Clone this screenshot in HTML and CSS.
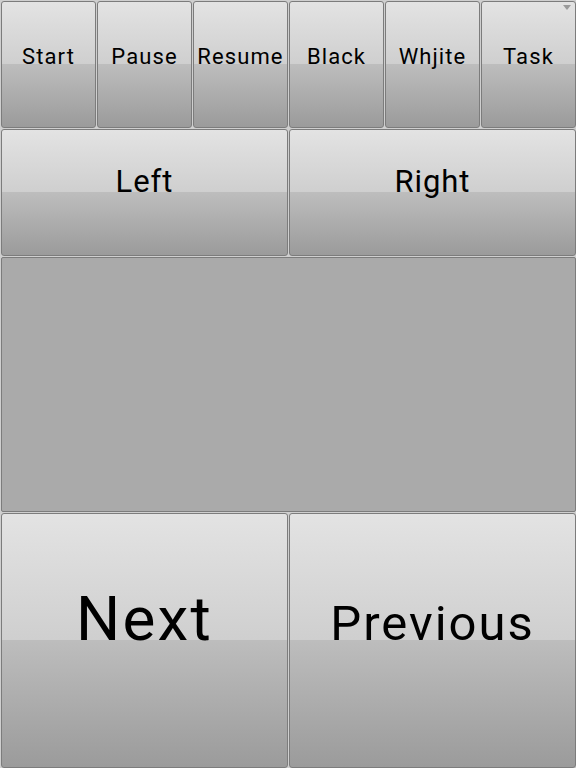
FILE: index.html
```html
<!DOCTYPE html>
<html lang="en">
<head>
    <meta charset="UTF-8">
    <meta name="viewport" content="width=device-width, initial-scale=1.0">
    <title>Remote</title>
    <link rel="stylesheet" href="styles.css">
</head>
<body>

    <div class="painel">
        <!-- Linha de comandos -->
        <button class="botao pequeno">Start</button>
        <button class="botao pequeno">Pause</button>
        <button class="botao pequeno">Resume</button>
        <button class="botao pequeno">Black</button>
        <button class="botao pequeno">Whjite</button>
        <button class="botao pequeno tarefa">Task</button>

        <!-- Setas -->
        <button class="botao medio metade">Left</button>
        <button class="botao medio metade">Right</button>

        <div class="area"></div>

        <!-- Slides -->
        <button class="botao metade grande">Next</button>
        <button class="botao metade grande-2">Previous</button>
    </div>

</body>
</html>
```

FILE: styles.css
```css
html, body {
    margin: 0;
    padding: 0;
}
body {
    font-family: Roboto, "Liberation Sans", sans-serif;
    background-color: #cfcfcf;
    color: #000;
}
.painel {
    display: grid;
    grid-template-columns: repeat(6, 1fr);
    grid-template-rows: 127px 127px 255px 255px;
    gap: 1px;
    padding: 1px 0 0 1px;
    width: 576px;
    height: 768px;
    box-sizing: border-box;
}
.botao {
    display: flex;
    align-items: center;
    justify-content: center;
    margin: 0;
    padding: 0 0 0.68em 0;
    border: 1px solid #7c7c7c;
    border-radius: 3px;
    font-family: inherit;
    color: #000;
    line-height: 1;
    background: linear-gradient(to bottom, #e3e3e3 0%, #cfcfcf 49.6%, #bdbdbd 50%, #9b9b9b 100%);
    box-sizing: border-box;
    white-space: nowrap;
    cursor: pointer;
}
.pequeno {
    font-size: 22px;
    letter-spacing: 0.05em;
    padding-bottom: 0.7em;
}
.medio {
    font-size: 31px;
    letter-spacing: 0.03em;
}
.metade {
    grid-column: span 3;
}
.grande {
    font-size: 62px;
    letter-spacing: 0.035em;
}
.grande-2 {
    font-size: 49px;
    letter-spacing: 0.04em;
}
.area {
    grid-column: span 6;
    background-color: #aaaaaa;
    border: 1px solid #7c7c7c;
    border-radius: 2px;
}
.tarefa {
    position: relative;
}
.tarefa::after {
    content: "";
    position: absolute;
    top: 3px;
    right: 4px;
    border-left: 4px solid transparent;
    border-right: 4px solid transparent;
    border-top: 5px solid #9a9a9a;
}
```
